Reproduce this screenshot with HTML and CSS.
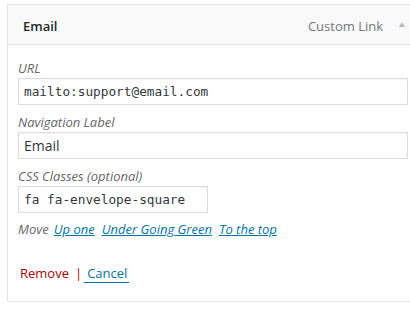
FILE: index.html
```html
<!DOCTYPE html>
<html>
<head>
<meta charset="utf-8">
<link rel="stylesheet" href="styles.css">
</head>
<body>
<div class="item">
  <div class="item-bar">
    <span class="item-title">Email</span>
    <span class="item-controls">
      <span class="item-type">Custom Link</span>
      <span class="item-arrow"></span>
    </span>
  </div>
  <div class="item-settings">
    <div class="field">
      <label class="lbl">URL</label>
      <input class="inp mono" type="text" value="mailto:support@email.com">
    </div>
    <div class="field">
      <label class="lbl">Navigation Label</label>
      <input class="inp" type="text" value="Email">
    </div>
    <div class="field">
      <label class="lbl">CSS Classes (optional)</label>
      <input class="inp mono short" type="text" value="fa fa-envelope-square">
    </div>
    <div class="move">
      <span class="move-lbl">Move</span>
      <a href="#" class="move-link">Up one</a>
      <a href="#" class="move-link">Under Going Green</a>
      <a href="#" class="move-link">To the top</a>
    </div>
    <div class="actions">
      <a href="#" class="remove">Remove</a>
      <span class="sep">|</span>
      <a href="#" class="cancel">Cancel</a>
    </div>
  </div>
</div>
</body>
</html>
```
FILE: styles.css
```css
html, body {
  margin: 0;
  padding: 0;
  background: #fff;
  overflow: hidden;
}
body {
  font-family: "Open Sans", "Noto Sans", sans-serif;
  font-size: 13px;
  color: #444;
}
.item {
  margin: 4px -9px 0 7px;
  border: 1px solid #e5e5e5;
  background: #fff;
}
.item-bar {
  height: 39px;
  background: #f9f9f9;
  border-bottom: 1px solid #e5e5e5;
  display: flex;
  align-items: center;
  justify-content: space-between;
  padding: 0 13px 0 15px;
}
.item-title {
  font-weight: 600;
  font-size: 13px;
  color: #23282d;
  position: relative;
  top: 1px;
}
.item-controls {
  display: flex;
  align-items: center;
}
.item-type {
  color: #72777c;
  font-size: 13px;
  position: relative;
  top: 1px;
}
.item-arrow {
  width: 0;
  height: 0;
  border-left: 3.5px solid transparent;
  border-right: 3.5px solid transparent;
  border-bottom: 5px solid #b4b9be;
  margin-left: 16px;
}
.item-settings {
  padding: 14px 10px 18px 10px;
}
.field {
  margin-bottom: 8px;
}
.lbl {
  display: block;
  font-style: italic;
  color: #666;
  line-height: 18px;
  margin-bottom: 1px;
}
.inp {
  display: block;
  box-sizing: border-box;
  width: 100%;
  height: 27px;
  border: 1px solid #ddd;
  padding: 0 5px;
  margin: 0;
  font-family: "Open Sans", "Noto Sans", sans-serif;
  font-size: 14px;
  color: #32373c;
  background: #fff;
  outline: none;
  box-shadow: inset 0 1px 2px rgba(0,0,0,0.04);
}
.inp.mono {
  font-family: "DejaVu Sans Mono", "Liberation Mono", monospace;
  font-size: 12.75px;
}
.inp.short {
  width: 190px;
}
.move {
  margin-top: -1px;
  line-height: 18px;
  display: flex;
  gap: 7px;
  font-style: italic;
}
.move-lbl {
  color: #666;
  margin-right: -2px;
}
.move-link {
  color: #0073aa;
  text-decoration: underline;
}
.actions {
  margin-top: 25px;
  line-height: 20px;
  display: flex;
  align-items: center;
  padding-left: 2px;
}
.remove {
  color: #a00;
  text-decoration: none;
}
.sep {
  color: #a00;
  margin: 0 2px 0 6px;
}
.cancel {
  color: #0073aa;
  text-decoration: none;
  border-bottom: 1px solid #0073aa;
  padding: 0 2px 0 3px;
  line-height: 18px;
}
```
